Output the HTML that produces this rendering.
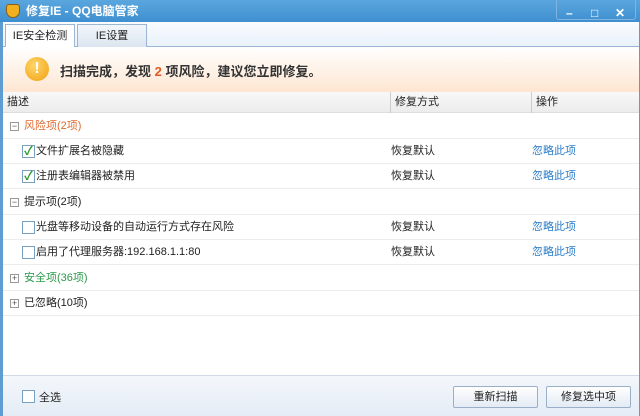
<!DOCTYPE html><html><head><meta charset="utf-8"><style>
*{margin:0;padding:0;box-sizing:border-box}
body{width:640px;height:416px;overflow:hidden;font:11px "Liberation Sans","Noto Sans CJK SC",sans-serif;color:#222;background:#fff;position:relative}
.title{position:absolute;left:0;top:0;width:640px;height:22px;background:linear-gradient(#5aa6de,#3f8fd0);color:#fff;font-weight:bold;font-size:12px;line-height:22px;padding-left:26px}
.logo{position:absolute;left:6px;top:4px;width:14px;height:14px;border-radius:3px 3px 7px 7px;background:#f0b020;border:1px solid #8a6010}
.wb{position:absolute;top:0;right:4px;width:80px;height:20px;border:1px solid #7fb4e0;border-top:none;border-radius:0 0 3px 3px;color:#fff;font-size:12px}
.wb span{position:absolute;top:2px}
.frame{position:absolute;left:0;top:22px;width:640px;height:394px;border-left:3px solid #5f9cd2;border-right:1px solid #5f9cd2}
.tabs{position:absolute;left:3px;top:22px;width:636px;height:25px;background:linear-gradient(#fafcff,#e9f1fa);border-bottom:1px solid #9bb6d3}
.tab{position:absolute;top:2px;height:23px;border:1px solid #9bb6d3;border-bottom:none;line-height:22px;text-align:center;font-size:11px}
.banner{position:absolute;left:3px;top:47px;width:636px;height:45px;background:linear-gradient(#fff,#fde6d2)}
.warn{position:absolute;left:22px;top:10px;width:24px;height:24px;border-radius:50%;background:radial-gradient(circle at 40% 35%,#ffd66a,#f0a010);color:#fff;font-weight:bold;font-size:16px;text-align:center;line-height:24px}
.btxt{position:absolute;left:57px;top:14px;font-size:13px;font-weight:bold;color:#333}
.hdr{position:absolute;left:3px;top:92px;width:636px;height:21px;background:linear-gradient(#f8f8f8,#ececec);border-bottom:1px solid #ddd;line-height:21px}
.row{position:absolute;left:3px;width:636px;height:25px;border-bottom:1px solid #ececec;line-height:25px}
.vl{position:absolute;top:92px;width:1px;height:21px;background:#ccc}
.pm{position:absolute;left:7px;top:8px;width:9px;height:9px;border:1px solid #999;font-size:9px;line-height:7px;text-align:center;color:#555}
.cb{position:absolute;left:19px;top:6px;width:13px;height:13px;border:1px solid #7aa0c0;background:#fff;color:#2a9a2a;font-size:12px;line-height:11px;text-align:center;font-weight:bold}
.t1{position:absolute;left:21px}.t2{position:absolute;left:33px}
.c2{position:absolute;left:388px}.c3{position:absolute;left:529px;color:#2a7dc9}
.bottom{position:absolute;left:3px;top:375px;width:636px;height:41px;background:linear-gradient(#f4f7fb,#e4ecf5);border-top:1px solid #d0dae6}
.btn{position:absolute;top:10px;height:22px;border:1px solid #9ab0c8;border-radius:2px;background:linear-gradient(#fff,#e3ebf4);text-align:center;line-height:20px;font-size:11px}
</style></head><body>
<div class="frame"></div>
<div class="title"><div class="logo"></div>修复IE - QQ电脑管家
<div class="wb"><span style="left:9px">–</span><span style="left:34px">□</span><span style="left:58px">✕</span></div></div>
<div class="tabs">
<div class="tab" style="left:2px;width:70px;background:#fff;height:24px">IE安全检测</div>
<div class="tab" style="left:74px;width:70px;background:linear-gradient(#f3f7fc,#dbe5f0)">IE设置</div></div>
<div class="banner"><div class="warn">!</div><div class="btxt">扫描完成，发现 <span style="color:#e05a20">2</span> 项风险，建议您立即修复。</div></div>
<div class="hdr"><span style="position:absolute;left:4px">描述</span><span class="c2" style="left:392px;color:#222">修复方式</span><span class="c2" style="left:533px;color:#222">操作</span></div>
<div class="vl" style="left:390px"></div><div class="vl" style="left:531px"></div>
<div class="row" style="top:114px"><div class="pm">−</div><span class="t1" style="color:#e06a30">风险项(2项)</span></div>
<div class="row" style="top:139px"><div class="cb">✓</div><span class="t2">文件扩展名被隐藏</span><span class="c2">恢复默认</span><span class="c3">忽略此项</span></div>
<div class="row" style="top:164px"><div class="cb">✓</div><span class="t2">注册表编辑器被禁用</span><span class="c2">恢复默认</span><span class="c3">忽略此项</span></div>
<div class="row" style="top:190px"><div class="pm">−</div><span class="t1">提示项(2项)</span></div>
<div class="row" style="top:215px"><div class="cb"></div><span class="t2">光盘等移动设备的自动运行方式存在风险</span><span class="c2">恢复默认</span><span class="c3">忽略此项</span></div>
<div class="row" style="top:240px"><div class="cb"></div><span class="t2">启用了代理服务器:192.168.1.1:80</span><span class="c2">恢复默认</span><span class="c3">忽略此项</span></div>
<div class="row" style="top:266px"><div class="pm">+</div><span class="t1" style="color:#2a9a4a">安全项(36项)</span></div>
<div class="row" style="top:291px"><div class="pm">+</div><span class="t1">已忽略(10项)</span></div>
<div class="bottom"><div class="cb" style="left:19px;top:14px"></div><span style="position:absolute;left:36px;top:13px">全选</span>
<div class="btn" style="left:450px;width:85px">重新扫描</div><div class="btn" style="left:543px;width:85px">修复选中项</div></div>
</body></html>
